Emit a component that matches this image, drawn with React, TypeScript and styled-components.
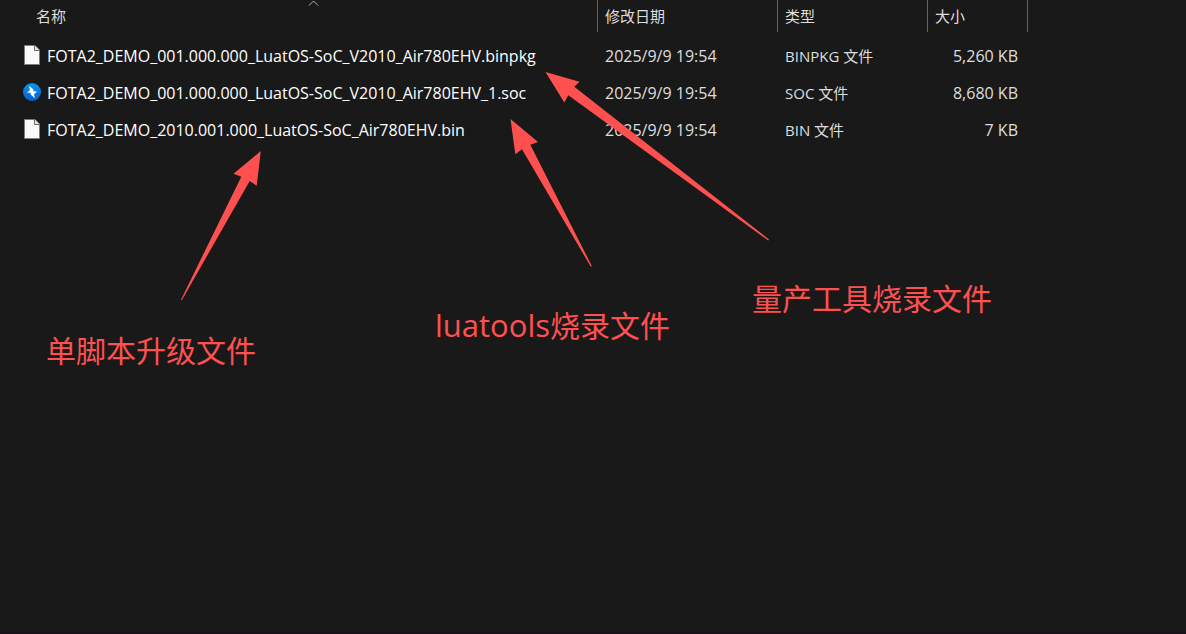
import React from "react";
import styled, { createGlobalStyle } from "styled-components";

const GlobalStyle = createGlobalStyle`
  *, *::before, *::after { box-sizing: border-box; }
  body {
    margin: 0;
    background: #191919;
    font-family: "Open Sans", "Noto Sans CJK SC", sans-serif;
    font-size: 15px;
    line-height: 20px;
    color: #dedede;
  }
`;

const Pane = styled.main`
  position: relative;
  min-height: 100vh;
  overflow: hidden;
  background: #191919;
  border-bottom: 2px solid #1b1118;
`;

const FileTable = styled.table`
  border-collapse: separate;
  border-spacing: 0;
  table-layout: fixed;
  width: 1028px;
`;

const Column = styled.col<{ $width: number }>`
  width: ${(p) => p.$width}px;
`;

const HeadCell = styled.th<{ $first?: boolean }>`
  position: relative;
  height: 32px;
  padding: 0 7px 0 ${(p) => (p.$first ? 36 : 7)}px;
  border-right: 1px solid #636363;
  font-weight: 400;
  text-align: left;
`;

const SortMark = styled.svg`
  position: absolute;
  top: 0;
  left: 308px;
`;

const FileRows = styled.tbody`
  &::before {
    content: "";
    display: block;
    height: 5px;
  }
`;

const Cell = styled.td<{ $align?: "right"; $size?: number }>`
  height: 37px;
  padding: 0 10px 0 7px;
  font-size: ${(p) => p.$size ?? 16}px;
  text-align: ${(p) => p.$align ?? "left"};
  white-space: nowrap;
`;

const FileName = styled.div`
  display: flex;
  align-items: flex-start;
  gap: 6px;
  padding-left: 16px;
  line-height: 22px;
  color: #ffffff;
`;

const Arrows = styled.svg`
  position: absolute;
  top: 0;
  left: 0;
  pointer-events: none;
`;

const Note = styled.p<{ $x: number; $y: number }>`
  position: absolute;
  left: ${(p) => p.$x}px;
  top: ${(p) => p.$y}px;
  margin: 0;
  font-size: 30px;
  line-height: 40px;
  color: #ff5050;
  white-space: nowrap;
`;

const Latin = styled.span`
  font-size: 31px;
`;

function PageIcon() {
  return (
    <svg width="18" height="20" viewBox="0 0 18 20" aria-hidden="true">
      <path d="M1.5 .5H12L16.500 5V19.500H1.500Z" fill="#fafafa" stroke="#7c7c7c" />
      <path d="M11.500 .5V5.500H16.500" fill="#e4e4e4" stroke="#6b6b6b" />
      <path d="M12.500 0H17V4.500Z" fill="#191919" />
    </svg>
  );
}

function BoltIcon() {
  return (
    <svg width="18" height="20" viewBox="0 0 18 20" aria-hidden="true">
      <defs>
        <linearGradient id="bolt-disc" x1="0" y1="0" x2="0" y2="1">
          <stop offset="0" stopColor="#0a96e8" />
          <stop offset="1" stopColor="#0560cc" />
        </linearGradient>
      </defs>
      <circle cx="9" cy="10" r="9" fill="url(#bolt-disc)" />
      <path d="M6 3.700L10.500 7.500L10.300 9.300L14.200 9.600L11 12.200L12 16.600L7.500 12.200L7.800 10.700L3.800 10.400L7 8.200Z" fill="#ffffff" />
    </svg>
  );
}

const files = [
  { icon: "page", name: "FOTA2_DEMO_001.000.000_LuatOS-SoC_V2010_Air780EHV.binpkg", date: "2025/9/9 19:54", type: "BINPKG 文件", size: "5,260 KB" },
  { icon: "bolt", name: "FOTA2_DEMO_001.000.000_LuatOS-SoC_V2010_Air780EHV_1.soc", date: "2025/9/9 19:54", type: "SOC 文件", size: "8,680 KB" },
  { icon: "page", name: "FOTA2_DEMO_2010.001.000_LuatOS-SoC_Air780EHV.bin", date: "2025/9/9 19:54", type: "BIN 文件", size: "7 KB" },
];

export default function App() {
  return (
    <>
      <GlobalStyle />
      <Pane>
        <FileTable>
          <colgroup>
            <Column $width={598} />
            <Column $width={180} />
            <Column $width={150} />
            <Column $width={100} />
          </colgroup>
          <thead>
            <tr>
              <HeadCell $first scope="col" aria-sort="ascending">
                名称
                <SortMark width="11" height="7" viewBox="0 0 11 7" aria-hidden="true">
                  <path d="M1 5.500L5.500 1L10 5.500" fill="none" stroke="#b0b0b0" />
                </SortMark>
              </HeadCell>
              <HeadCell scope="col">修改日期</HeadCell>
              <HeadCell scope="col">类型</HeadCell>
              <HeadCell scope="col">大小</HeadCell>
            </tr>
          </thead>
          <FileRows>
            {files.map((file) => (
              <tr key={file.name}>
                <Cell>
                  <FileName>
                    {file.icon === "page" ? <PageIcon /> : <BoltIcon />}
                    <span>{file.name}</span>
                  </FileName>
                </Cell>
                <Cell>{file.date}</Cell>
                <Cell $size={15}>{file.type}</Cell>
                <Cell $align="right">{file.size}</Cell>
              </tr>
            ))}
          </FileRows>
        </FileTable>

        <Arrows width="800" height="320" viewBox="0 0 800 320" fill="#ff5050" aria-hidden="true">
          <path d="M545.500 72L579.500 81.700L574.300 86.700L769 239.500L768.300 240.500L568.300 95.300L564.300 102.500Z" />
          <path d="M510.500 119L538 142L530.300 144.700L591.800 266L590.800 266.700L522 149.300L515.300 154.300Z" />
          <path d="M260.800 151L256.700 185.800L249.700 181L181.800 300.200L181 299.700L241.300 176.700L233.500 173.700Z" />
        </Arrows>
        <Note $x={46} $y={331}>单脚本升级文件</Note>
        <Note $x={435} $y={305}><Latin>luatools</Latin>烧录文件</Note>
        <Note $x={752} $y={279}>量产工具烧录文件</Note>
      </Pane>
    </>
  );
}
